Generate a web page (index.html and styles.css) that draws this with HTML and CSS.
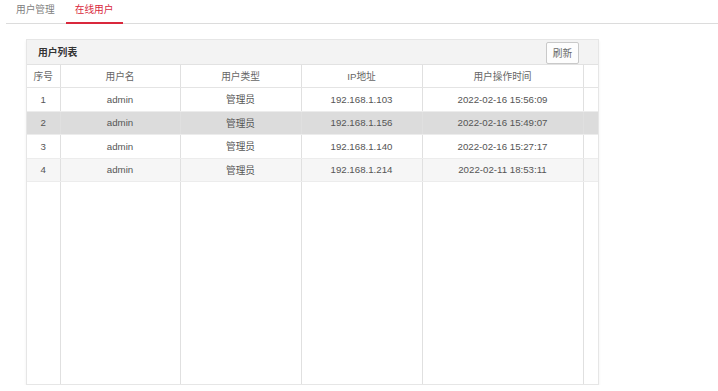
FILE: index.html
```html
<!DOCTYPE html>
<html lang="zh-CN">
<head>
    <meta charset="UTF-8">
    <meta name="viewport" content="width=device-width, initial-scale=1.0">
    <title>在线用户</title>
    <link rel="stylesheet" href="styles.css">
</head>
<body>

    <!-- Tabs -->
    <div class="tab-bar">
        <a class="tab">用户管理</a>
        <a class="tab active">在线用户</a>
    </div>

    <!-- User list panel -->
    <div class="panel">
        <div class="panel-header">
            <span class="panel-title">用户列表</span>
            <button class="refresh-btn">刷新</button>
        </div>

        <table class="user-table">
            <colgroup>
                <col style="width: 33px">
                <col style="width: 120px">
                <col style="width: 121px">
                <col style="width: 121px">
                <col style="width: 161px">
                <col style="width: 15px">
            </colgroup>
            <thead>
                <tr>
                    <th>序号</th>
                    <th>用户名</th>
                    <th>用户类型</th>
                    <th>IP地址</th>
                    <th>用户操作时间</th>
                    <th></th>
                </tr>
            </thead>
            <tbody>
                <tr>
                    <td>1</td><td>admin</td><td>管理员</td><td>192.168.1.103</td><td>2022-02-16 15:56:09</td><td></td>
                </tr>
                <tr class="selected">
                    <td>2</td><td>admin</td><td>管理员</td><td>192.168.1.156</td><td>2022-02-16 15:49:07</td><td></td>
                </tr>
                <tr>
                    <td>3</td><td>admin</td><td>管理员</td><td>192.168.1.140</td><td>2022-02-16 15:27:17</td><td></td>
                </tr>
                <tr class="striped">
                    <td>4</td><td>admin</td><td>管理员</td><td>192.168.1.214</td><td>2022-02-11 18:53:11</td><td></td>
                </tr>
                <!-- empty space below rows keeps the column lines -->
                <tr class="filler">
                    <td></td><td></td><td></td><td></td><td></td><td></td>
                </tr>
            </tbody>
        </table>
    </div>

</body>
</html>
```

FILE: styles.css
```css
/* General Styles */
body {
    margin: 0;
    font-family: "Liberation Sans", Arial, "Noto Sans CJK SC", sans-serif;
    font-size: 9.7px;
    color: #555;
    background: #fff;
}

/* Tabs */
.tab-bar {
    display: flex;
    gap: 2px;
    height: 23px;
    margin-left: 6px;
    padding-left: 1px;
    border-bottom: 1px solid #dcdcdc;
}

.tab {
    padding: 3px 9px 5px;
    line-height: 14px;
    height: 14px;
    border-bottom: 2px solid transparent;
    color: #808080;
    cursor: pointer;
}

.tab.active {
    color: #d9283c;
    border-bottom-color: #d9283c;
    margin-bottom: -1px;
}

/* Panel */
.panel {
    width: 571px;
    margin: 15px 0 0 26px;
    border: 1px solid #e6e6e6;
    box-shadow: 0 2px 3px rgba(0, 0, 0, 0.06);
}

.panel-header {
    display: flex;
    align-items: center;
    justify-content: space-between;
    height: 24px;
    padding: 0 19px 0 11px;
    background-color: #f3f3f3;
    border-bottom: 1px solid #e2e2e2;
}

.panel-title {
    font-weight: bold;
    color: #333;
    font-size: 9.8px;
}

.refresh-btn {
    height: 22px;
    width: 33px;
    padding: 0;
    margin-top: 1px;
    font-family: inherit;
    font-size: 9.7px;
    color: #666;
    background: #fdfdfd;
    border: 1px solid #c9c9c9;
    border-radius: 2px;
    cursor: pointer;
}

/* Table */
.user-table {
    width: 571px;
    table-layout: fixed;
    border-collapse: collapse;
}

.user-table th,
.user-table td {
    padding: 0;
    text-align: center;
    border-left: 1px solid #e0e0e0;
    border-bottom: 1px solid #ececec;
    white-space: nowrap;
    overflow: hidden;
}

.user-table th:first-child,
.user-table td:first-child {
    border-left: none;
}

.user-table th {
    height: 22px;
    font-weight: normal;
    color: #666;
    border-bottom-color: #e4e4e4;
}

.user-table td {
    height: 22.5px;
}

.user-table tr.selected td {
    background-color: #dcdcdc;
}

.user-table tr.striped td {
    background-color: #f6f6f6;
}

.user-table tr.filler td {
    height: 202px;
    border-bottom: none;
}
```
